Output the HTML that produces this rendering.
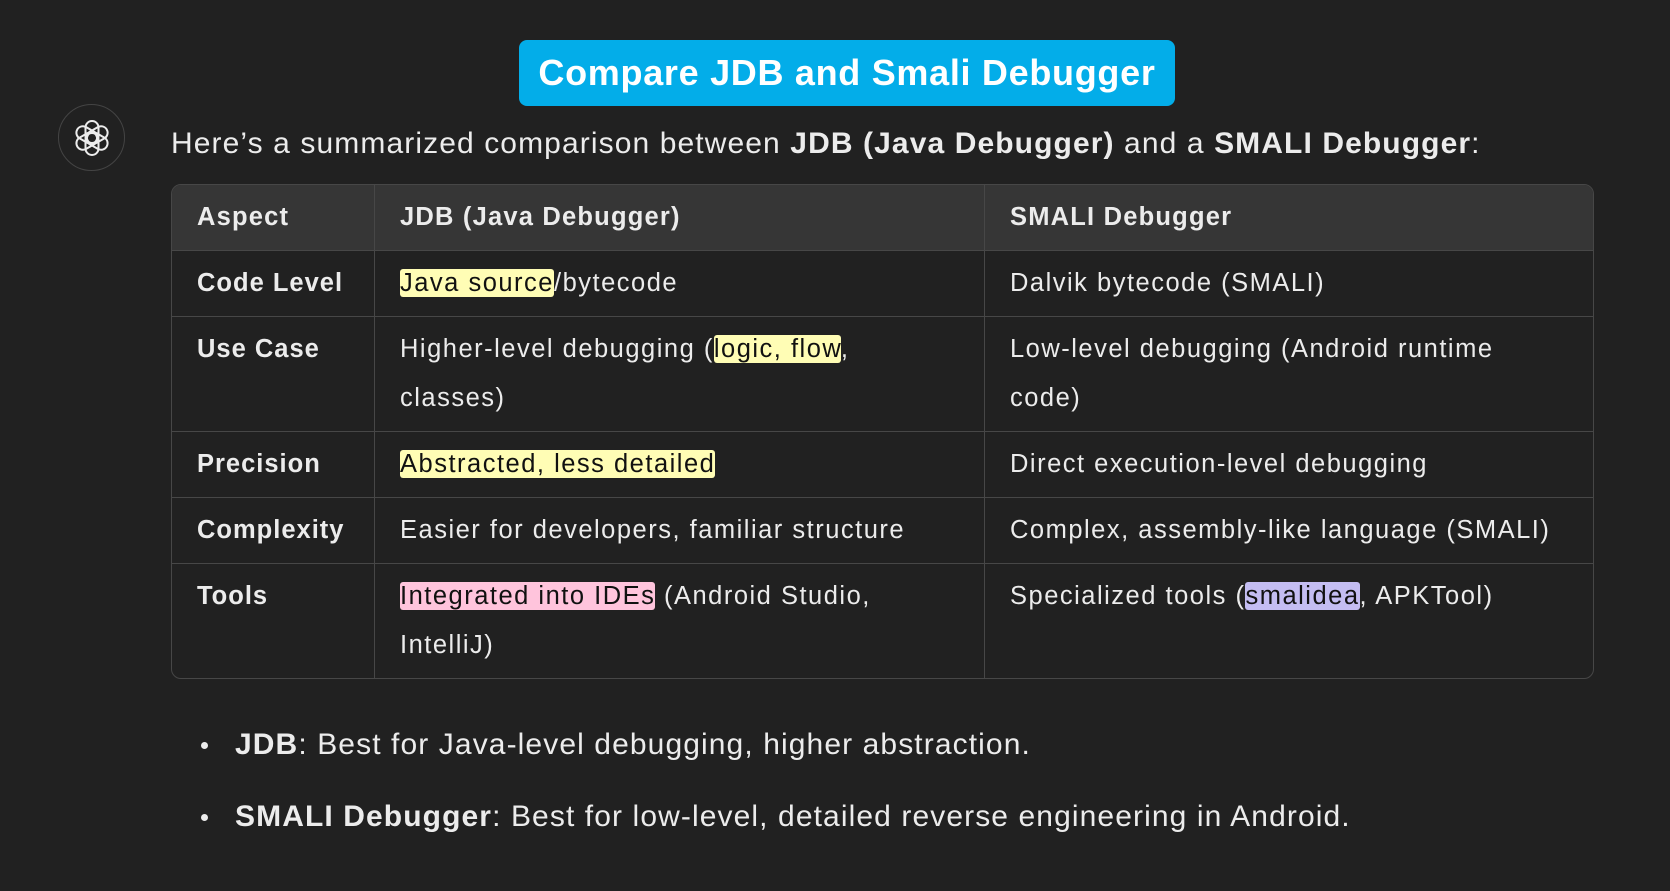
<!DOCTYPE html>
<html><head><meta charset="utf-8"><style>
*{margin:0;padding:0;box-sizing:border-box}
body{width:1670px;height:891px;background:#212121;color:#ececec;font-family:"Liberation Sans",sans-serif;position:relative;overflow:hidden}
.title{position:absolute;left:519px;top:40px;width:656px;height:66px;background:#03ade9;border-radius:8px;color:#fff;font-weight:bold;font-size:36px;letter-spacing:.7px;text-align:center;line-height:66px}
.av{position:absolute;left:58px;top:104px;width:67px;height:67px;border:1.5px solid #444;border-radius:50%}
.av svg{position:absolute;left:13px;top:13px}
.intro{position:absolute;left:171px;top:127px;font-size:30px;letter-spacing:1.1px;white-space:nowrap}
table{position:absolute;left:171px;top:184px;width:1423px;border-collapse:separate;border-spacing:0;border:1.5px solid #474747;border-radius:10px;overflow:hidden;font-size:25.5px;letter-spacing:1.5px}
td,th{border-right:1.5px solid #474747;border-bottom:1.5px solid #474747;padding:8px 25px;line-height:49px;vertical-align:top;text-align:left;white-space:nowrap}
tr td:last-child,tr th:last-child{border-right:none}
tr:last-child td{border-bottom:none}
th{background:#363636;font-weight:bold;letter-spacing:1.2px}
td:first-child{font-weight:bold;letter-spacing:1px}
.y{background:#fffdb5;color:#111;border-radius:3px}
.p{background:#ffc4dc;color:#111;border-radius:3px}
.v{background:#c4bdf2;color:#111;border-radius:3px}
ul{position:absolute;left:201px;top:721px;list-style:none;font-size:30px;letter-spacing:1.1px}
li{position:relative;padding-left:34px;height:72px;line-height:48px;white-space:nowrap}
li:before{content:"";position:absolute;left:0;top:21px;width:7px;height:7px;border-radius:50%;background:#ececec}
</style></head><body>
<div class="title">Compare JDB and Smali Debugger</div>
<div class="av"><svg width="40" height="40" viewBox="-20 -20 40 40" fill="none" stroke="#ececec" stroke-width="2">
<g><rect x="-6.5" y="-17" width="13" height="22" rx="6.5"/></g>
<g transform="rotate(60)"><rect x="-6.5" y="-17" width="13" height="22" rx="6.5"/></g>
<g transform="rotate(120)"><rect x="-6.5" y="-17" width="13" height="22" rx="6.5"/></g>
<g transform="rotate(180)"><rect x="-6.5" y="-17" width="13" height="22" rx="6.5"/></g>
<g transform="rotate(240)"><rect x="-6.5" y="-17" width="13" height="22" rx="6.5"/></g>
<g transform="rotate(300)"><rect x="-6.5" y="-17" width="13" height="22" rx="6.5"/></g>
</svg></div>
<div class="intro">Here’s a summarized comparison between <b>JDB (Java Debugger)</b> and a <b>SMALI Debugger</b>:</div>
<table>
<colgroup><col style="width:203px"><col style="width:610px"><col></colgroup>
<tr><th>Aspect</th><th>JDB (Java Debugger)</th><th>SMALI Debugger</th></tr>
<tr><td>Code Level</td><td><span class="y">Java source</span>/bytecode</td><td>Dalvik bytecode (SMALI)</td></tr>
<tr><td>Use Case</td><td>Higher-level debugging (<span class="y">logic, flow</span>,<br>classes)</td><td>Low-level debugging (Android runtime<br>code)</td></tr>
<tr><td>Precision</td><td><span class="y">Abstracted, less detailed</span></td><td>Direct execution-level debugging</td></tr>
<tr><td>Complexity</td><td>Easier for developers, familiar structure</td><td>Complex, assembly-like language (SMALI)</td></tr>
<tr><td>Tools</td><td><span class="p">Integrated into IDEs</span> (Android Studio,<br>IntelliJ)</td><td>Specialized tools (<span class="v">smalidea</span>, APKTool)</td></tr>
</table>
<ul>
<li><b>JDB</b>: Best for Java-level debugging, higher abstraction.</li>
<li><b>SMALI Debugger</b>: Best for low-level, detailed reverse engineering in Android.</li>
</ul>
</body></html>
